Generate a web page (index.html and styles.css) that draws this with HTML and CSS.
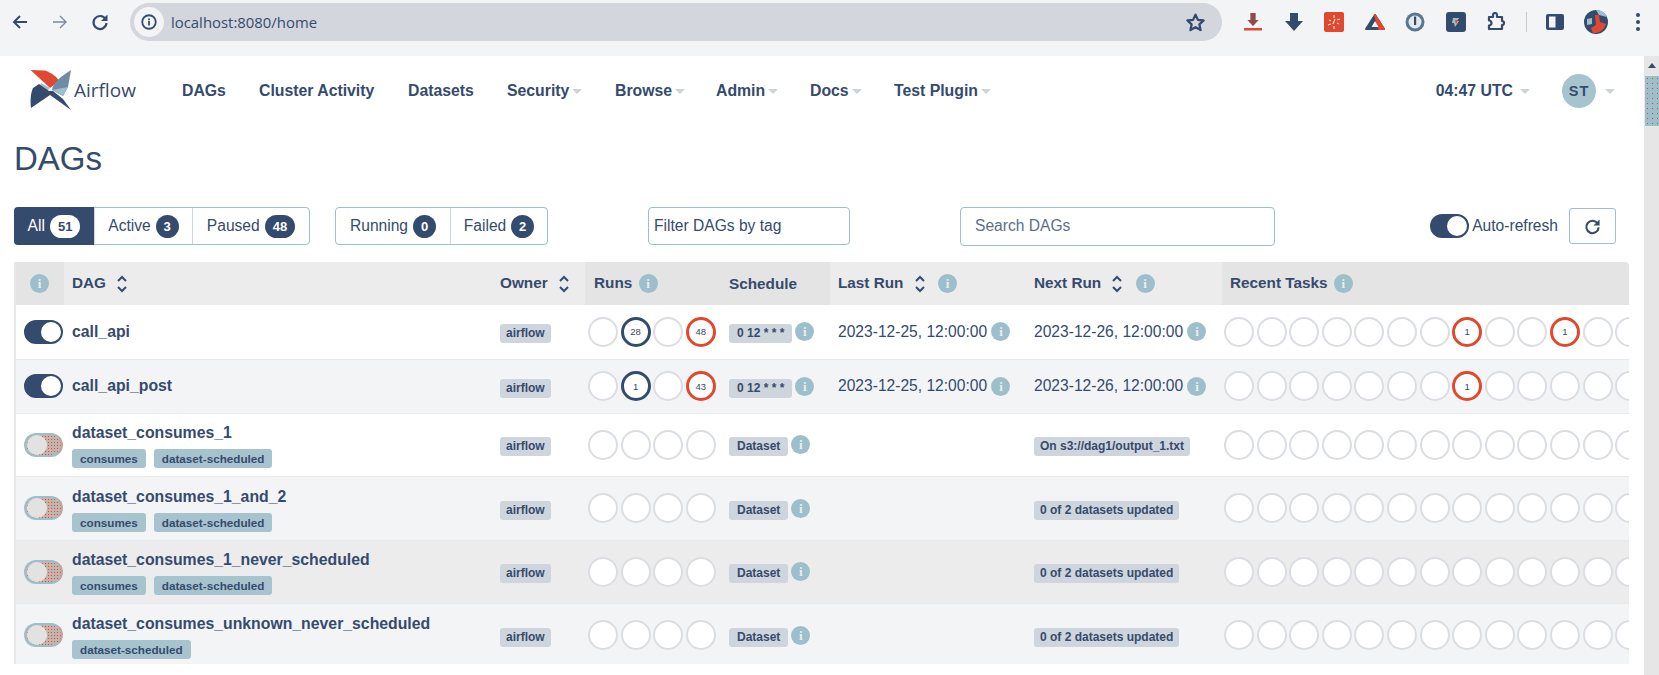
FILE: index.html
```html
<!DOCTYPE html>
<html lang="en">
<head>
    <meta charset="UTF-8">
    <meta name="viewport" content="width=device-width, initial-scale=1.0">
    <title>DAGs - Airflow</title>
    <link rel="stylesheet" href="styles.css">
</head>
<body>
    <svg class="sprites" width="0" height="0">
        <symbol id="sort" viewBox="0 0 12 20"><path d="M2 7l4-4 4 4M2 13l4 4 4-4" fill="none" stroke="currentColor" stroke-width="2"/></symbol>
        <symbol id="caret" viewBox="0 0 10 5"><path d="M0 0h10L5 5z" fill="currentColor"/></symbol>
    </svg>

    <div class="toolbar">
        <svg class="tool-icon" viewBox="0 0 20 20"><path d="M17 10H4M10 4l-6 6 6 6" fill="none" stroke="currentColor" stroke-width="2"/></svg>
        <svg class="tool-icon forward" viewBox="0 0 20 20"><path d="M3 10h13M10 4l6 6-6 6" fill="none" stroke="currentColor" stroke-width="1.4"/></svg>
        <svg class="tool-icon" viewBox="0 0 20 20"><path d="M15.5 7A6.5 6.5 0 1 0 16.5 11" fill="none" stroke="currentColor" stroke-width="2.2"/><path d="M17.5 2.5v6.5H11z" fill="currentColor"/></svg>
        <div class="address">
            <span class="site-info">
                <svg viewBox="0 0 20 20" width="18" height="18"><circle cx="10" cy="10" r="7.5" fill="none" stroke="currentColor" stroke-width="2"/><path d="M9 9h2v5H9zM9 6h2v2H9z" fill="currentColor"/></svg>
            </span>
            <span class="url">localhost:8080/home</span>
            <svg class="star" viewBox="0 0 20 20"><path d="M10 2.5l2.3 5 5.4.6-4 3.7 1.1 5.4L10 14.5l-4.8 2.7 1.1-5.4-4-3.7 5.4-.6z" fill="none" stroke="currentColor" stroke-width="2.2" stroke-linejoin="round"/></svg>
        </div>
        <div class="extensions">
            <svg class="ext" viewBox="0 0 20 20"><path d="M7.5 1h5v7h3L10 14 4.5 8h3z" fill="#354b6e"/><path d="M7.5 1h5v7h3L10 14 4.5 8h3z" fill="#e0492f" opacity=".55"/><path d="M1 16h18v2.5H1z" fill="#e0492f"/></svg>
            <svg class="ext" viewBox="0 0 20 20"><path d="M6 1h8v8h5l-9 10L1 9h5z" fill="#354b6e"/></svg>
            <svg class="ext" viewBox="0 0 20 20"><rect width="20" height="20" rx="2" fill="#e0492f"/><path d="M10 3v3M10 14v3M5 8l2 1M13 11l2 1M4 13l3-1M13 8l3-1M9 12l2-5" stroke="#f3d5cf" stroke-width="1.3" fill="none"/></svg>
            <svg class="ext" viewBox="0 0 20 20"><path d="M10 3L1 17h18z" fill="#354b6e" stroke="#354b6e" stroke-width="2" stroke-linejoin="round"/><path d="M10 3l9 14h-5z" fill="#e0492f" stroke="#e0492f" stroke-width="2" stroke-linejoin="round"/><path d="M10 9l3.5 6h-7z" fill="#f3f4f6"/></svg>
            <svg class="ext" viewBox="0 0 20 20"><circle cx="10" cy="10" r="9.5" fill="#5c7690"/><circle cx="10" cy="10" r="6.5" fill="#e3eaee"/><path d="M9 4.5h2.2V13H9z" fill="#354b6e"/></svg>
            <svg class="ext" viewBox="0 0 20 20"><rect width="20" height="20" rx="3" fill="#354b6e"/><path d="M7 6h6l-2 3h2l-4 6-1-4H6z" fill="#9dbfc9"/><path d="M9 8h3l-2 4z" fill="#e0492f"/></svg>
            <svg class="ext" viewBox="0 0 20 20"><path d="M3 5h4V3a2 2 0 0 1 4 0v2h5v4a2 2 0 0 1 0 4v4H3v-3.5a2.5 2.5 0 0 0 0-5z" fill="none" stroke="#354b6e" stroke-width="2.2" stroke-linejoin="round"/></svg>
            <span class="ext-sep"></span>
            <svg class="ext panel" viewBox="0 0 20 20"><rect x="1" y="2" width="18" height="16" rx="2" fill="#354b6e"/><rect x="4" y="4.5" width="6.5" height="11" fill="#f3f4f6"/></svg>
            <svg class="ext profile" viewBox="0 0 24 24"><circle cx="12" cy="12" r="12" fill="#354b6e"/><path d="M12 0a12 12 0 0 1 11 7l-8-2z" fill="#9dbfc9"/><path d="M3 9l5-1v6l-5 1z" fill="#9dbfc9"/><path d="M11 5h4l1 7 6 2a12 12 0 0 1-13 9l-2-5 5-3z" fill="#e0492f"/></svg>
            <svg class="ext dots" viewBox="0 0 4 18"><circle cx="2" cy="2" r="2" fill="#354b6e"/><circle cx="2" cy="9" r="2" fill="#354b6e"/><circle cx="2" cy="16" r="2" fill="#354b6e"/></svg>
        </div>
    </div>

    <div class="viewport">
        <div class="page">
            <nav class="navbar">
                <a class="brand">
                    <svg class="logo" viewBox="0 0 42 40">
                        <path d="M.5 0L15 .5C22 3 27 7 29 11L20 18z" fill="#e0492f"/>
                        <path d="M41 0L38 17 33 26 22 20C23 12 32 6 41 0z" fill="#6f8ba5"/>
                        <path d="M22 20L38 17 33 26z" fill="#9dbfc9"/>
                        <path d="M11 13L20 18 17 21 9 19z" fill="#9dbfc9"/>
                        <path d="M9 14L19 21 23 21 33 29 41 40 20 25 1 38C0 30 1 22 3 18z" fill="#354b6e"/>
                    </svg>
                    <span class="brand-name">Airflow</span>
                </a>
                <ul class="nav-links">
                    <li class="nav-dags">DAGs</li>
                    <li class="nav-cluster">Cluster Activity</li>
                    <li class="nav-datasets">Datasets</li>
                    <li class="nav-security">Security<svg class="caret"><use href="#caret"/></svg></li>
                    <li class="nav-browse">Browse<svg class="caret"><use href="#caret"/></svg></li>
                    <li class="nav-admin">Admin<svg class="caret"><use href="#caret"/></svg></li>
                    <li class="nav-docs">Docs<svg class="caret"><use href="#caret"/></svg></li>
                    <li>Test Plugin<svg class="caret"><use href="#caret"/></svg></li>
                </ul>
                <div class="nav-right">
                    <span class="clock">04:47 UTC<svg class="caret"><use href="#caret"/></svg></span>
                    <span class="user"><span class="avatar">ST</span><svg class="caret"><use href="#caret"/></svg></span>
                </div>
            </nav>

            <h1 class="title">DAGs</h1>

            <div class="filters">
                <div class="btn-group group-status">
                    <span class="filter-btn on">All <b class="count">51</b></span>
                    <span class="filter-btn btn-active">Active <b class="count">3</b></span>
                    <span class="filter-btn btn-paused">Paused <b class="count">48</b></span>
                </div>
                <div class="btn-group group-state">
                    <span class="filter-btn btn-running">Running <b class="count">0</b></span>
                    <span class="filter-btn btn-failed">Failed <b class="count">2</b></span>
                </div>
                <div class="tag-filter">Filter DAGs by tag</div>
                <div class="search">Search DAGs</div>
                <label class="auto-refresh"><span class="switch on"></span>Auto-refresh</label>
                <button class="refresh">
                    <svg viewBox="0 0 20 20" width="19" height="19"><path d="M15.5 7A6.5 6.5 0 1 0 16.5 11" fill="none" stroke="currentColor" stroke-width="2.2"/><path d="M17.5 2.5v6.5H11z" fill="currentColor"/></svg>
                </button>
            </div>

            <table class="dags">
                <colgroup>
                    <col class="c-toggle"><col class="c-dag"><col class="c-owner"><col class="c-runs"><col class="c-schedule"><col class="c-last"><col class="c-next"><col class="c-tasks">
                </colgroup>
                <thead>
                    <tr>
                        <th class="dark"><i class="info">i</i></th>
                        <th>DAG <svg class="sort"><use href="#sort"/></svg></th>
                        <th>Owner <svg class="sort"><use href="#sort"/></svg></th>
                        <th class="dark head-runs">Runs <i class="info">i</i></th>
                        <th class="dark">Schedule</th>
                        <th>Last Run <svg class="sort"><use href="#sort"/></svg> <i class="info">i</i></th>
                        <th>Next Run <svg class="sort"><use href="#sort"/></svg> <i class="info">i</i></th>
                        <th class="dark">Recent Tasks <i class="info">i</i></th>
                    </tr>
                </thead>
                <tbody id="rows"></tbody>
            </table>
        </div>

        <div class="scrollbar">
            <span class="scroll-up"></span>
            <span class="scroll-thumb"></span>
        </div>
    </div>

    <script>
        const dags = [
            { id: 'call_api', paused: false, tags: [], schedule: '0 12 * * *', last: '2023-12-25, 12:00:00', next: '2023-12-26, 12:00:00', runs: { 1: [28, 'ok'], 3: [48, 'bad'] }, tasks: { 7: 1, 10: 1 } },
            { id: 'call_api_post', paused: false, tags: [], schedule: '0 12 * * *', last: '2023-12-25, 12:00:00', next: '2023-12-26, 12:00:00', runs: { 1: [1, 'ok'], 3: [43, 'bad'] }, tasks: { 7: 1 } },
            { id: 'dataset_consumes_1', paused: true, tags: ['consumes', 'dataset-scheduled'], schedule: 'Dataset', pill: 'On s3://dag1/output_1.txt' },
            { id: 'dataset_consumes_1_and_2', paused: true, tags: ['consumes', 'dataset-scheduled'], schedule: 'Dataset', pill: '0 of 2 datasets updated' },
            { id: 'dataset_consumes_1_never_scheduled', paused: true, hover: true, tags: ['consumes', 'dataset-scheduled'], schedule: 'Dataset', pill: '0 of 2 datasets updated' },
            { id: 'dataset_consumes_unknown_never_scheduled', paused: true, tags: ['dataset-scheduled'], schedule: 'Dataset', pill: '0 of 2 datasets updated' }
        ];

        function circles(total, filled) {
            let html = '<div class="circles">';
            for (let i = 0; i < total; i++) {
                const hit = filled && filled[i];
                if (!hit) html += '<span class="circle"></span>';
                else if (Array.isArray(hit)) html += `<span class="circle ${hit[1]}">${hit[0]}</span>`;
                else html += `<span class="circle bad">${hit}</span>`;
            }
            return html + '</div>';
        }

        document.getElementById('rows').innerHTML = dags.map(dag => {
            const tags = dag.tags.map(t => `<span class="tag">${t}</span>`).join('');
            return `<tr class="${dag.tags.length ? 'tall' : ''} ${dag.hover ? 'hover' : ''}">
                <td class="cell-toggle"><span class="switch ${dag.paused ? '' : 'on'}"></span></td>
                <td class="${tags ? 'cell-tagged' : ''}"><a class="dag-id">${dag.id}</a>${tags ? `<div class="tags">${tags}</div>` : ''}</td>
                <td><span class="pill">airflow</span></td>
                <td class="cell-runs">${circles(4, dag.runs)}</td>
                <td class="cell-schedule"><span class="pill">${dag.schedule}</span><i class="info">i</i></td>
                <td>${dag.last ? `<span class="date">${dag.last}</span> <i class="info">i</i>` : ''}</td>
                <td>${dag.next ? `<span class="date">${dag.next}</span> <i class="info">i</i>` : `<span class="pill">${dag.pill}</span>`}</td>
                <td class="cell-tasks">${circles(13, dag.tasks)}</td>
            </tr>`;
        }).join('');
    </script>
</body>
</html>
```

FILE: styles.css
```css
* {
    box-sizing: border-box;
}
html, body {
    height: 100%;
}
body {
    margin: 0;
    overflow: hidden;
    background: #fff;
    color: #354b6e;
    font-family: "Liberation Sans", Arial, sans-serif;
    font-size: 15.6px;
}
.sprites {
    position: absolute;
}

/* browser bar */
.toolbar {
    display: flex;
    align-items: center;
    height: 56px;
    padding: 0 0 12px 10px;
    background: #f3f4f6;
}
.tool-icon {
    width: 20px;
    height: 20px;
    margin-right: 20px;
}
.tool-icon.forward {
    color: #7a8ba5;
}
.address {
    display: flex;
    align-items: center;
    width: 1092px;
    height: 38px;
    padding: 0 16px 0 4px;
    border-radius: 19px;
    background: #d3d7dd;
}
.site-info {
    display: flex;
    align-items: center;
    justify-content: center;
    width: 30px;
    height: 30px;
    border-radius: 50%;
    background: #f3f4f6;
}
.url {
    margin-left: 7px;
    font-family: "Open Sans", sans-serif;
    font-size: 14.9px;
}
.star {
    width: 21px;
    height: 21px;
    margin-left: auto;
}
.extensions {
    display: flex;
    align-items: center;
    margin-left: 21px;
}
.ext {
    width: 20px;
    height: 20px;
    margin-right: 20.5px;
}
.ext-sep {
    width: 1px;
    height: 20px;
    margin: 0 18px 0 -1px;
    background: #c5cbd3;
}
.ext.profile {
    width: 24px;
    height: 24px;
    margin-right: 28px;
    margin-left: -1px;
}
.ext.dots {
    width: 4px;
    height: 18px;
    margin-right: 0;
}

.viewport {
    display: flex;
    height: 619px;
}
.page {
    flex: 1;
    height: 608px;
    padding-left: 14px;
    padding-right: 16px;
    overflow: hidden;
}

/* airflow navbar */
.navbar {
    display: flex;
    align-items: center;
    height: 68px;
    margin-left: 16px;
    font-size: 15.8px;
    font-weight: bold;
}
.brand {
    display: flex;
    align-items: center;
    width: 152px;
}
.logo {
    width: 42px;
    height: 40px;
}
.brand-name {
    margin-left: 2px;
    font-family: "Open Sans", sans-serif;
    font-size: 19px;
    font-weight: 400;
}
.nav-links {
    display: flex;
    margin: 0;
    padding: 2px 0 0;
    list-style: none;
}
.nav-links li {
    white-space: nowrap;
}
.nav-dags { width: 77px; }
.nav-cluster { width: 149px; }
.nav-datasets { width: 99px; }
.nav-security { width: 108px; }
.nav-browse { width: 101px; }
.nav-admin { width: 94px; }
.nav-docs { width: 84px; }
.caret {
    width: 10px;
    height: 5px;
    margin-left: 3px;
    color: #cdd3da;
    vertical-align: middle;
}
.nav-right {
    display: flex;
    align-items: center;
    margin-left: auto;
    margin-right: 13px;
    padding-top: 2px;
}
.clock {
    margin-right: 32px;
}
.clock .caret {
    margin-left: 7px;
}
.user {
    display: flex;
    align-items: center;
}
.avatar {
    display: flex;
    align-items: center;
    justify-content: center;
    width: 34px;
    height: 34px;
    margin-right: 6px;
    border-radius: 50%;
    background: #a7c4ce;
    font-size: 14.5px;
    letter-spacing: 1px;
}

.title {
    margin: 16px 0 0;
    font-size: 33px;
    font-weight: 400;
    line-height: 38px;
}

/* filter row */
.filters {
    display: flex;
    align-items: center;
    height: 40px;
    margin-top: 28px;
}
.btn-group {
    display: flex;
    height: 38px;
    border: 1px solid #9dbfc9;
    border-radius: 4px;
}
.group-status {
    width: 296px;
}
.group-state {
    width: 213px;
    margin-left: 25px;
}
.filter-btn {
    display: flex;
    align-items: center;
    justify-content: center;
    gap: 5px;
    border-left: 1px solid #c9d8de;
    white-space: nowrap;
}
.filter-btn:first-child {
    border-left: 0;
}
.filter-btn.on {
    width: 80px;
    margin: -1px 0 -1px -1px;
    border-radius: 4px 0 0 4px;
    background: #354b6e;
    color: #fff;
}
.btn-active { width: 98px; }
.btn-paused { flex: 1; }
.btn-running { width: 114px; }
.btn-failed { flex: 1; }
.count {
    min-width: 23px;
    padding: 0 8px;
    border-radius: 12px;
    background: #354b6e;
    color: #fff;
    font-size: 13px;
    line-height: 23px;
    text-align: center;
}
.btn-active .count, .btn-running .count, .btn-failed .count {
    padding: 0 4px;
}
.on .count {
    background: #fff;
    color: #354b6e;
}
.tag-filter, .search {
    display: flex;
    align-items: center;
    height: 38px;
    border: 1px solid #9dbfc9;
    border-radius: 4px;
}
.tag-filter {
    width: 202px;
    margin-left: 100px;
    padding-left: 5px;
}
.search {
    width: 315px;
    height: 39px;
    margin-left: 110px;
    padding-left: 14px;
    color: #5b6f8b;
}
.auto-refresh {
    display: flex;
    align-items: center;
    gap: 3px;
    margin-left: auto;
}
.refresh {
    display: flex;
    align-items: center;
    justify-content: center;
    width: 47px;
    height: 36px;
    margin-left: 11px;
    margin-right: 12px;
    border: 1px solid #9dbfc9;
    border-radius: 3px;
    background: #fff;
    color: #354b6e;
}

.switch {
    display: inline-block;
    position: relative;
    width: 39px;
    height: 24px;
    border-radius: 12px;
    background-color: #c2b5b0;
    background-image: radial-gradient(#e0492f 0.8px, transparent 1px);
    background-size: 3px 3px;
    border: 2px solid #9dbfc9;
    border-right-color: #c9a49a;
    vertical-align: middle;
}
.switch::after {
    content: "";
    position: absolute;
    top: 0;
    left: 1px;
    width: 20px;
    height: 20px;
    border-radius: 50%;
    background: #e2e2e2;
}
.switch.on {
    background: #354b6e;
    border-color: #354b6e;
}
.switch.on::after {
    left: auto;
    right: 0;
    background: #fff;
}

/* table */
.dags {
    width: 1614px;
    margin-top: 16px;
    border-collapse: collapse;
    table-layout: fixed;
    border-left: 2px solid #e8e8e8;
}
.c-toggle { width: 49px; }
.c-dag { width: 428px; }
.c-owner { width: 93px; }
.c-runs { width: 136px; }
.c-schedule { width: 109px; }
.c-last { width: 196px; }
.c-next { width: 196px; }
.c-tasks { width: 407px; }

th {
    height: 43px;
    padding: 0 0 0 8px;
    background: #ececec;
    font-size: 15.3px;
    text-align: left;
    white-space: nowrap;
}
th.dark {
    background: #e4e4e4;
}
th.head-runs {
    padding-left: 9px;
}
th:first-child {
    padding-left: 14px;
}
th:last-child {
    border-radius: 0 4px 0 0;
}
th .info {
    margin-left: 2px;
}
th:first-child .info {
    margin-left: 0;
}
td {
    height: 54px;
    padding: 0 0 0 8px;
    border-bottom: 1px solid #e8e9ea;
    white-space: nowrap;
    overflow: hidden;
}
tbody tr:nth-child(even) {
    background: #f3f4f6;
}
tbody tr.tall td {
    height: 63.5px;
}
tbody tr.hover {
    background: #ececec;
}
.cell-runs {
    padding-left: 3px;
}
.cell-tasks {
    padding-left: 2px;
}
td.cell-tagged {
    padding-top: 3px;
}
.dag-id {
    font-size: 15.8px;
    font-weight: bold;
}
.tags {
    display: flex;
    gap: 8px;
    margin-top: 7px;
}
.tag {
    height: 19px;
    padding: 0 8px;
    border-radius: 3px;
    background: #a7c4ce;
    font-size: 11.7px;
    font-weight: bold;
    line-height: 19px;
}
.pill {
    display: inline-block;
    height: 19px;
    margin-top: 4px;
    padding: 0 6px;
    border-radius: 3px;
    background: #cfd5dc;
    font-size: 12px;
    font-weight: bold;
    line-height: 19px;
    vertical-align: middle;
}
.cell-schedule .pill {
    margin-right: 3px;
    padding: 0 8px;
}
.info {
    display: inline-block;
    width: 19px;
    height: 19px;
    border-radius: 50%;
    background: #9dbfc9;
    color: #e6eff2;
    font-family: "Liberation Serif", serif;
    font-size: 13px;
    font-style: normal;
    font-weight: bold;
    line-height: 19px;
    text-align: center;
    vertical-align: middle;
}
.sort {
    width: 12px;
    height: 20px;
    margin: 0 6px;
    vertical-align: middle;
}
.date {
    vertical-align: middle;
}
.circles {
    display: flex;
    gap: 2.6px;
}
.circle {
    display: flex;
    flex: none;
    align-items: center;
    justify-content: center;
    width: 30px;
    height: 30px;
    border: 2px solid #dadde2;
    border-radius: 50%;
    background: #fff;
    font-size: 9.5px;
}
.circle.ok {
    border: 3px solid #354b6e;
}
.circle.bad {
    border: 3px solid #e0492f;
}

/* page scrollbar, the browser's own is hidden */
.scrollbar {
    flex: none;
    display: flex;
    flex-direction: column;
    width: 15px;
    background: #e6e6e6;
}
.scroll-up {
    height: 20px;
    position: relative;
}
.scroll-up::after {
    content: "";
    position: absolute;
    left: 4px;
    top: 7px;
    border: 4.5px solid transparent;
    border-top: 0;
    border-bottom: 5px solid #354b6e;
}
.scroll-thumb {
    height: 50px;
    margin-left: 1px;
    background-color: #9dbfc9;
    background-image: radial-gradient(#e0492f .8px, transparent 1px);
    background-size: 5px 5px;
}
```
